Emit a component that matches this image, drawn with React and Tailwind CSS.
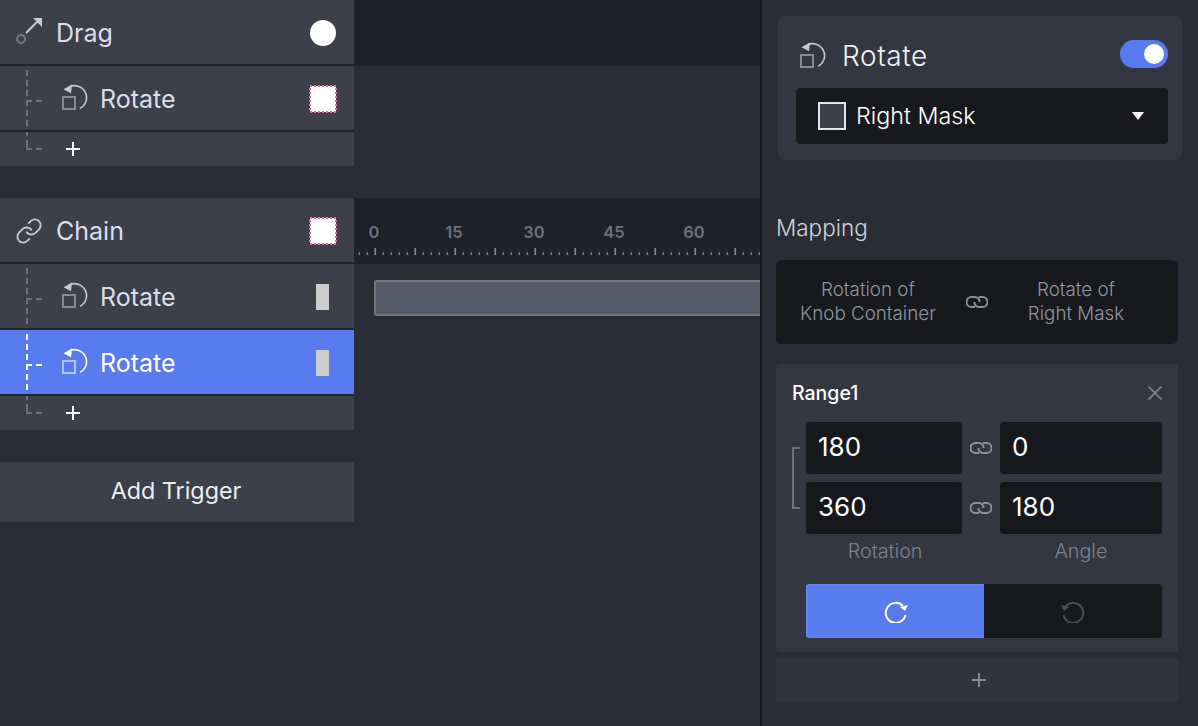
import React from "react";
import { Link } from "lucide-react";

const RotateIcon = ({ active }) => (
  <svg width="28" height="28" viewBox="0 0 28 28" fill="none" className="shrink-0">
    <rect x="1" y="13" width="12" height="12" stroke={active ? "#b4c4f6" : "#868a96"} strokeWidth="2" />
    <path d="M7 3 A12 12 0 0 1 18 24.4" stroke={active ? "#ffffff" : "#c6c9d1"} strokeWidth="1.6" />
    <path d="M1.5 5.2 L10 0.5 L9 9.2 Z" fill={active ? "#ffffff" : "#c6c9d1"} />
  </svg>
);

const DragIcon = () => (
  <svg width="30" height="30" viewBox="0 0 30 30" fill="none" className="shrink-0 mt-[2px]">
    <circle cx="5" cy="21" r="4" stroke="#757985" strokeWidth="2" />
    <path d="M10 15 L22 3" stroke="#c8cbd3" strokeWidth="2" />
    <path d="M17 0 L26 0 L26 9 Z" fill="#c8cbd3" />
  </svg>
);

const Chain = ({ color = "#8b8f9a", className = "" }) => (
  <svg width="22" height="12" viewBox="0 0 22 12" fill="none" className={"shrink-0 " + className}>
    <path d="M13.5 6 A4.5 4.5 0 0 0 9 1 H5.5 A5 5 0 0 0 5.5 11 H9" stroke={color} strokeWidth="2" />
    <path d="M8.5 6 A4.5 4.5 0 0 0 13 11 H16.5 A5 5 0 0 0 16.5 1 H13" stroke={color} strokeWidth="2" />
  </svg>
);

const TreeBranch = ({ active }) => {
  const c = active ? "#ffffff" : "#6f737f";
  return (
    <svg width="44" height="64" viewBox="0 0 44 64" fill="none" className="shrink-0">
      <path d="M27 4 V62" stroke={c} strokeWidth="2" strokeDasharray="6 4" />
      <path d="M26 35 H32 M36 35 H42" stroke={c} strokeWidth="2" />
    </svg>
  );
};

const TreeEnd = () => (
  <svg width="44" height="34" viewBox="0 0 44 34" fill="none" className="shrink-0">
    <path d="M27 0 V4 M27 8 V17 H32 M36 17 H42" stroke="#6f737f" strokeWidth="2" />
  </svg>
);

const Plus = ({ color = "#fff", size = 14, sw = 2 }) => (
  <svg width={size} height={size} viewBox="0 0 14 14" fill="none" className="shrink-0">
    <path d="M7 0 V14 M0 7 H14" stroke={color} strokeWidth={sw} />
  </svg>
);

const PinkBox = () => (
  <svg width="28" height="28" viewBox="0 0 28 28" className="shrink-0 mt-[2px]">
    <rect x="1" y="1" width="26" height="26" fill="#ffffff" />
    <rect x="1" y="1" width="26" height="26" fill="none" stroke="#f562a8" strokeWidth="2" strokeDasharray="2 2" />
  </svg>
);
const WhiteCircle = () => <div className="w-[26px] h-[26px] mt-[2px] rounded-full bg-white mx-px" />;
const GrayBar = () => <div className="w-[13px] h-[26px] mt-[2px] bg-[#cdcdcd] mr-[8px] ml-[7px]" />;

const ParentRow = ({ icon, label, end }) => (
  <div className="h-16 bg-[#3d404b] flex items-center pl-[16px] pr-[17px]">
    <div className="w-[40px] flex items-center">{icon}</div>
    <span className="flex-1 pt-[4px] text-[25px] text-[#d9deea]">{label}</span>
    {end}
  </div>
);

const ChildRow = ({ end, active }) => (
  <div className={"h-16 flex items-center pr-[17px] " + (active ? "bg-[#587cf0]" : "bg-[#3d404b]")}>
    <TreeBranch active={active} />
    <div className="ml-[18px] mr-[10px]"><RotateIcon active={active} /></div>
    <span className={"flex-1 pt-[4px] text-[25px] " + (active ? "text-white" : "text-[#d9deea]")}>Rotate</span>
    {end}
  </div>
);

const AddRow = () => (
  <div className="h-[34px] bg-[#3d404b] flex items-center">
    <TreeEnd />
    <div className="ml-[22px]"><Plus /></div>
  </div>
);

const Ruler = () => {
  const ticks = [];
  for (let i = -2; i < 49; i++) {
    const x = 20.5 + i * 8;
    const major = i % 5 === 0;
    ticks.push(<rect key={i} x={x} y={major ? 50 : 54} width="1.6" height={major ? 7 : 3} fill={major ? "#8a8e99" : "#717581"} />);
  }
  return (
    <div className="h-[66px] bg-[#1e2129] relative overflow-hidden">
      <div className="flex pt-[22px] -ml-[20px] text-[16.5px] font-semibold text-[#6d717d] leading-6 text-center">
        {["0", "15", "30", "45", "60"].map((t) => (
          <span key={t} className="w-[80px] shrink-0">{t}</span>
        ))}
      </div>
      <svg width="406" height="66" className="absolute left-0 top-0">{ticks}</svg>
    </div>
  );
};

const Input = ({ value, className }) => (
  <div className={"h-[52px] bg-[#17181d] rounded text-[26px] text-white flex items-center pl-3 pb-[3px] " + className}>{value}</div>
);

export default function App() {
  return (
    <div className="w-[1198px] h-[726px] flex bg-[#2a2d35] overflow-hidden" style={{ fontFamily: "Inter, 'Liberation Sans', sans-serif" }}>
      {/* Left column */}
      <div className="w-[354px] shrink-0 flex flex-col">
        <div className="flex flex-col gap-[2px] bg-[#21232a]">
          <ParentRow icon={<DragIcon />} label="Drag" end={<WhiteCircle />} />
          <ChildRow end={<PinkBox />} />
          <AddRow />
        </div>
        <div className="flex flex-col gap-[2px] bg-[#21232a] mt-8">
          <ParentRow
            icon={<Link size={28} strokeWidth={1.6} color="#c5c8d0" className="-ml-px mt-[2px]" />}
            label="Chain"
            end={<PinkBox />}
          />
          <ChildRow end={<GrayBar />} />
          <ChildRow end={<GrayBar />} active />
          <AddRow />
        </div>
        <div className="mt-8 h-[60px] bg-[#3d404b] flex items-center justify-center pr-[2px] pb-[2px] text-[23.3px] text-[#eceef3]">Add Trigger</div>
      </div>

      {/* Timeline */}
      <div className="w-[406px] shrink-0 flex flex-col">
        <div className="h-[66px] bg-[#1e2129]" />
        <div className="h-[132px]" />
        <Ruler />
        <div className="pl-[20px] pt-[16px]">
          <div className="h-[36px] bg-[#555b68] border-2 border-r-0 border-[#70757f] rounded-l-[3px]" />
        </div>
      </div>

      {/* Inspector */}
      <div className="w-[438px] shrink-0 border-l-2 border-[#191b20] flex flex-col pl-[14px] pr-[20px] pt-4">
        <div className="ml-[2px] mr-[-4px] h-[144px] bg-[#343741] rounded-lg pl-[18px] pr-[14px] pt-[24px]">
          <div className="flex items-center h-[28px] pl-[4px] pr-0">
            <div className="mt-[4px]"><RotateIcon /></div>
            <span className="ml-[14px] pt-[4px] flex-1 text-[28px] font-light text-[#f1f2f6] tracking-[0.6px]">Rotate</span>
            <div className="w-[48px] h-[28px] rounded-full bg-[#587cf0] flex items-center justify-end pr-[4px]">
              <div className="w-[20px] h-[20px] rounded-full bg-white" />
            </div>
          </div>
          <div className="mt-[20px] h-[56px] bg-[#18191d] rounded flex items-center pl-[22px] pr-[24px]">
            <div className="w-[28px] h-[28px] bg-[#3d4049] border-2 border-[#dfe4f0]" />
            <span className="ml-[10px] flex-1 text-[23.3px] font-light text-white">Right Mask</span>
            <div className="w-0 h-0 border-l-[6px] border-r-[6px] border-t-[8px] border-l-transparent border-r-transparent border-t-white" />
          </div>
        </div>

        <div className="mt-[54px] h-[28px] flex items-center text-[22.5px] font-light text-[#d0d3db]">Mapping</div>

        <div className="mt-[18px] h-[84px] bg-[#18191d] rounded-md flex items-center text-[18.8px] leading-[24px] font-light text-[#9095a1] text-center">
          <div className="w-[184px]">Rotation of<br />Knob Container</div>
          <Chain color="#8d919c" className="ml-[6px]" />
          <div className="flex-1 pr-[14px]">Rotate of<br />Right Mask</div>
        </div>

        <div className="mt-[20px] h-[288px] bg-[#343741] rounded-sm px-[16px] pt-[18px]">
          <div className="flex items-center justify-between h-[22px]">
            <span className="pt-[2px] text-[19.5px] font-medium text-white">Range1</span>
            <svg width="14" height="14" viewBox="0 0 14 14" fill="none">
              <path d="M0.5 0.5 L13.5 13.5 M13.5 0.5 L0.5 13.5" stroke="#7d818c" strokeWidth="1.7" />
            </svg>
          </div>
          <div className="mt-[18px] flex">
            <div className="w-[14px] flex items-center">
              <div className="w-[8px] h-[62px] border-2 border-r-0 border-[#6d717c]" />
            </div>
            <div className="flex-1 flex flex-col gap-2">
              <div className="flex items-center">
                <Input value="180" className="w-[156px]" />
                <Chain className="mx-[8px]" />
                <Input value="0" className="w-[162px]" />
              </div>
              <div className="flex items-center">
                <Input value="360" className="w-[156px]" />
                <Chain className="mx-[8px]" />
                <Input value="180" className="w-[162px]" />
              </div>
            </div>
          </div>
          <div className="flex pl-[14px] mt-[5px] text-[19.8px] font-light text-[#7d818d] text-center leading-6">
            <div className="w-[158px] pl-[2px]">Rotation</div>
            <div className="w-[36px]" />
            <div className="w-[166px] pl-[2px]">Angle</div>
          </div>
          <div className="mt-[21px] ml-[14px] flex h-[54px] rounded overflow-hidden">
            <div className="w-[178px] bg-[#587cf0] border-2 border-r-0 border-[#5f86f5] flex items-center justify-center">
              <svg width="24" height="24" viewBox="0 0 24 24" fill="none">
                <path d="M19 7 A10 10 0 1 0 21.5 16" stroke="#fff" strokeWidth="2" />
                <path d="M16 8 L24 6 L21 12 Z" fill="#fff" />
              </svg>
            </div>
            <div className="w-[178px] bg-[#18191d] flex items-center justify-center">
              <svg width="24" height="24" viewBox="0 0 24 24" fill="none">
                <path d="M5 7 A10 10 0 1 1 2.5 16" stroke="#4a4d57" strokeWidth="2" />
                <path d="M8 8 L0 6 L3 12 Z" fill="#4a4d57" />
              </svg>
            </div>
          </div>
        </div>

        <div className="mt-[6px] h-[44px] bg-[#31343d] rounded-sm flex items-center justify-center pl-[4px]">
          <Plus color="#8b8f9a" size={14} sw={1.8} />
        </div>
      </div>
    </div>
  );
}
